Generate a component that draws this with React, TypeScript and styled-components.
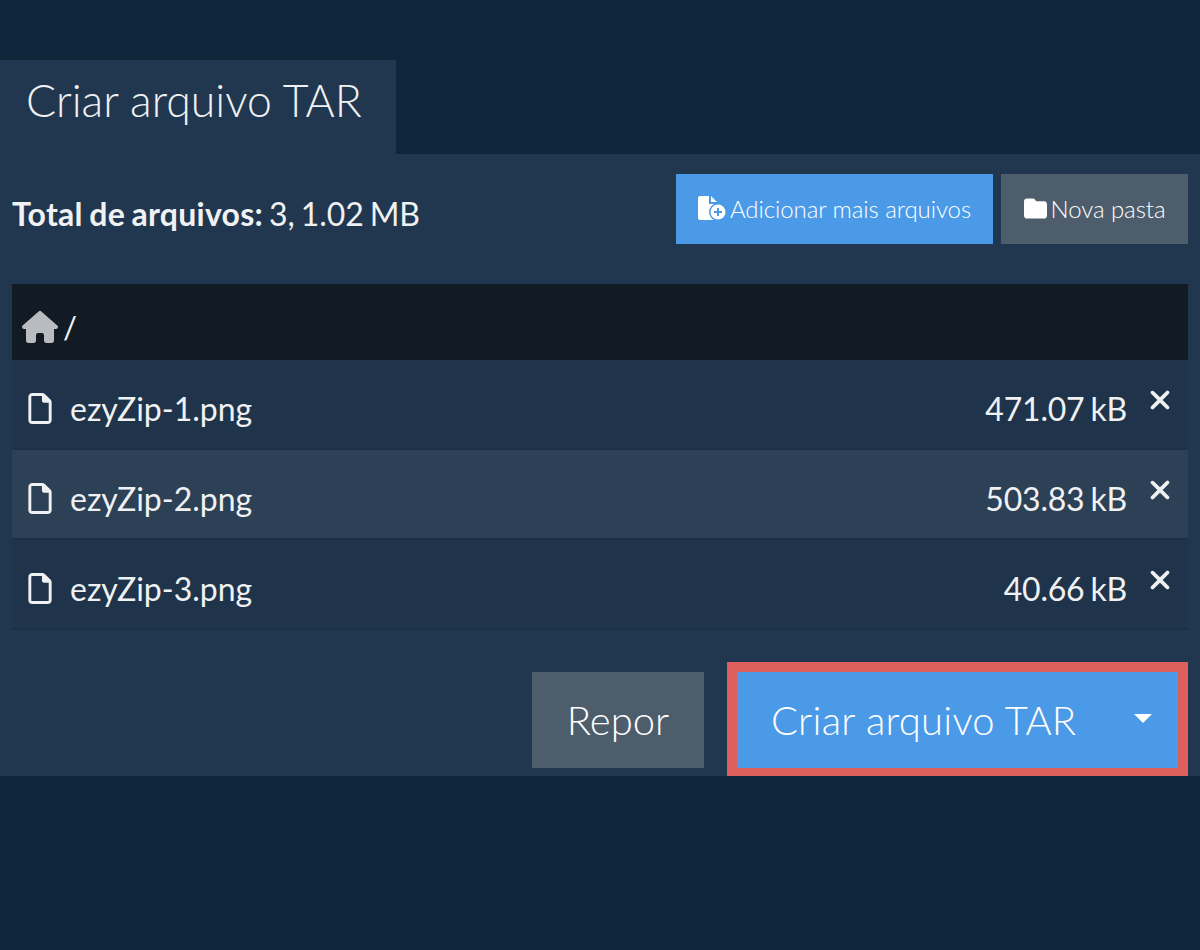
import React from "react";
import styled, { createGlobalStyle } from "styled-components";
import { FaFolder, FaHouse, FaRegFile, FaXmark } from "react-icons/fa6";

const files = [
  { name: "ezyZip-1.png", size: "471.07 kB" },
  { name: "ezyZip-2.png", size: "503.83 kB", hover: true },
  { name: "ezyZip-3.png", size: "40.66 kB" },
];

const GlobalStyle = createGlobalStyle`
  html, body {
    margin: 0;
    padding: 0;
    background: #0f2539;
    font-family: Lato, "Liberation Sans", sans-serif;
  }
  * {
    box-sizing: border-box;
  }
`;

const Page = styled.div`
  height: 950px;
  padding-top: 60px;
  overflow: hidden;
`;

const Tab = styled.div`
  width: 396px;
  height: 94px;
  padding: 12px 0 0 26px;
  background: #20374f;
  color: #f0f1f2;
  font-size: 44.6px;
  font-weight: 300;
  line-height: 56px;
  white-space: nowrap;
`;

const Panel = styled.div`
  height: 622px;
  padding: 20px 12px 0;
  background: #20374f;
`;

const Toolbar = styled.div`
  display: flex;
  align-items: flex-start;
  height: 110px;
`;

const Total = styled.div`
  flex: 1;
  padding-top: 21px;
  color: #f0f1f2;
  font-size: 32px;
  line-height: 38px;
  letter-spacing: -0.1px;
  word-spacing: -2px;
  white-space: nowrap;

  b {
    font-weight: 700;
    letter-spacing: 0.25px;
    word-spacing: -1.5px;
  }
`;

const SmallButton = styled.div<{ $primary?: boolean; $width: number }>`
  display: flex;
  align-items: center;
  justify-content: center;
  gap: 4px;
  width: ${(p) => p.$width}px;
  height: 70px;
  margin-left: 8px;
  padding-bottom: 2px;
  background: ${(p) => (p.$primary ? "#4b9ae8" : "#4e5d6c")};
  color: #fff;
  font-size: 24px;
  font-weight: 300;
  letter-spacing: -0.08px;
  white-space: nowrap;

  svg {
    font-size: 23px;
  }
`;

const Crumb = styled.div`
  display: flex;
  align-items: center;
  gap: 5px;
  height: 76px;
  padding: 10px 0 0 10px;
  background: #121a24;
  color: #f0f1f2;
  font-size: 31px;

  svg {
    color: #b8bcc0;
    font-size: 32px;
    width: 36px;
  }
`;

const Row = styled.div<{ $hover?: boolean }>`
  display: flex;
  align-items: center;
  height: 90px;
  padding: 8px 0 0 16px;
  background: ${(p) => (p.$hover ? "#2c4056" : "#1f344b")};
  border-bottom: 2px solid #1c3045;
  color: #f0f1f2;
  font-size: 32px;
`;

const FileIcon = styled(FaRegFile)`
  flex: none;
  width: 24px;
  height: 31px;
  margin-right: 18px;
`;

const Name = styled.span`
  flex: 1;
`;

const Size = styled.span`
  letter-spacing: -0.2px;
  word-spacing: -2px;
  white-space: nowrap;
`;

const Remove = styled.span`
  display: flex;
  justify-content: center;
  align-items: center;
  width: 33px;
  height: 28px;
  margin: 0 12px 16px 16px;
  color: #f0f1f2;
  font-size: 30px;
`;

const Actions = styled.div`
  display: flex;
  justify-content: flex-end;
  align-items: flex-start;
  margin-top: 32px;
`;

const Reset = styled.div`
  display: flex;
  align-items: center;
  justify-content: center;
  width: 172px;
  height: 96px;
  margin: 10px 23px 0 0;
  background: #4e5d6c;
  color: #fff;
  font-size: 40px;
  font-weight: 300;
`;

const Highlight = styled.div`
  width: 461px;
  height: 114px;
  border: solid #dc5f5d;
  border-width: 10px 10px 8px 10px;
`;

const SubmitButton = styled.div`
  display: flex;
  align-items: center;
  height: 100%;
  padding-left: 34px;
  background: #4b9ae8;
  color: #fff;
  font-size: 40px;
  font-weight: 300;
  letter-spacing: 0.25px;
  white-space: nowrap;
`;

const Caret = styled.span`
  width: 0;
  height: 0;
  margin: 0 0 4px 58px;
  border-style: solid;
  border-width: 9px 9px 0;
  border-color: #fff transparent transparent;
`;

const AddFileIcon = () => (
  <svg width="28" height="24" viewBox="0 0 28 24" aria-hidden="true">
    <path
      fill="#fff"
      d="M2 0h9v8h8v16H2a2 2 0 0 1-2-2V2a2 2 0 0 1 2-2zm11 0 6 6h-6z"
    />
    <circle cx="20" cy="16" r="9" fill="#4b9ae8" />
    <circle cx="20" cy="16" r="7.5" fill="#fff" />
    <path fill="#4b9ae8" d="M19 12h2v3h3v2h-3v3h-2v-3h-3v-2h3z" />
  </svg>
);

export default function App() {
  return (
    <Page>
      <GlobalStyle />
      <Tab>Criar arquivo TAR</Tab>
      <Panel>
        <Toolbar>
          <Total>
            <b>Total de arquivos:</b> 3, 1.02 MB
          </Total>
          <SmallButton $primary $width={317}>
            <AddFileIcon />
            Adicionar mais arquivos
          </SmallButton>
          <SmallButton $width={187}>
            <FaFolder />
            Nova pasta
          </SmallButton>
        </Toolbar>
        <Crumb>
          <FaHouse />/
        </Crumb>
        {files.map((file) => (
          <Row key={file.name} $hover={file.hover}>
            <FileIcon />
            <Name>{file.name}</Name>
            <Size>{file.size}</Size>
            <Remove>
              <FaXmark />
            </Remove>
          </Row>
        ))}
        <Actions>
          <Reset>Repor</Reset>
          <Highlight>
            <SubmitButton>
              Criar arquivo TAR
              <Caret />
            </SubmitButton>
          </Highlight>
        </Actions>
      </Panel>
    </Page>
  );
}
